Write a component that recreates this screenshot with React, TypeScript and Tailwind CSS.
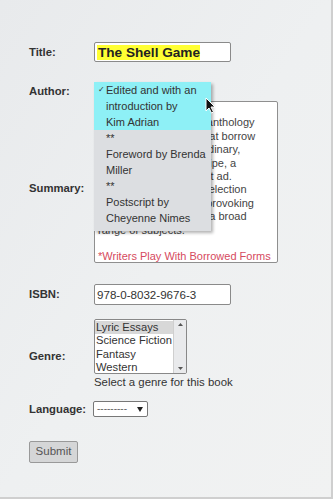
import React from 'react';

const font = { fontFamily: '"Liberation Sans", Arial, sans-serif' };

const summaryLines = [
  'Edited by Kim Adrian,',
  'The Shell Game is an anthology',
  'of innovative essays that borrow',
  'the structures of the ordinary,',
  'daily life, such as a recipe, a',
  'a shopping list, or a lost ad.',
  'Here is a remarkable selection',
  'of twenty-two thought-provoking',
  'lyric essays that cover a broad',
  'range of subjects.',
];

const authorOptions = [
  { lines: ['Edited and with an', 'introduction by', 'Kim Adrian'], selected: true },
  { lines: ['**'] },
  { lines: ['Foreword by Brenda', 'Miller'] },
  { lines: ['**'] },
  { lines: ['Postscript by', 'Cheyenne Nimes'] },
];

const genres = ['Lyric Essays', 'Science Fiction', 'Fantasy', 'Western'];

const Label = ({ children }: { children: React.ReactNode }) => (
  <div className="w-[65px] shrink-0 text-[11.3px] font-bold text-[#333]">{children}</div>
);

const Cursor = () => (
  <svg width="12" height="17" viewBox="0 0 12 17" className="absolute left-[205px] top-[97px]">
    <path d="M1 1 L1 14 L4 11 L6.5 16 L8.5 15 L6 10 L10 10 Z" fill="#111" stroke="#fff" strokeWidth="1" />
  </svg>
);

const App = () => {
  return (
    <div
      style={font}
      className="w-[333px] h-[499px] bg-gradient-to-br from-[#e8eaec] via-[#eef0f1] to-[#f1f2f2] border-r-2 border-b-2 border-[#cfcfcf] relative"
    >
      <div className="flex flex-col pl-[29px] pt-[42px]">
        {/* Title */}
        <div className="flex items-center h-[20px]">
          <Label>Title:</Label>
          <div className="w-[137px] h-[20px] bg-white border border-[#8a8a8a] rounded-[2px] flex items-center px-[2px]">
            <span className="bg-[#ffff33] text-[13.6px] font-bold text-[#222] leading-[15px] pl-[1px]">The Shell Game</span>
          </div>
        </div>

        {/* Author */}
        <div className="flex items-start h-[19px] mt-[20px]">
          <Label>
            <div className="pt-[1px]">Author:</div>
          </Label>
        </div>

        {/* Summary */}
        <div className="flex items-center">
          <Label>
            <div className="pt-[12px]">Summary:</div>
          </Label>
          <div className="w-[184px] h-[162px] bg-white border border-[#8f8f8f] rounded-[2px] px-[3px] pt-[1px] text-[11px] leading-[13.4px] text-[#444] overflow-hidden">
            {summaryLines.map((l, i) => (
              <div key={i} className="whitespace-nowrap">{l}</div>
            ))}
            <div className="h-[13.4px]" />
            <div className="whitespace-nowrap text-[#d64a5e]">*Writers Play With Borrowed Forms</div>
          </div>
        </div>

        {/* ISBN */}
        <div className="flex items-center mt-[21px]">
          <Label>ISBN:</Label>
          <div className="w-[137px] h-[21px] bg-white border border-[#8a8a8a] rounded-[2px] flex items-center pl-[2px] text-[11.6px] text-[#333]">
            978-0-8032-9676-3
          </div>
        </div>

        {/* Genre */}
        <div className="flex mt-[14px]">
          <Label>
            <div className="pt-[29px]">Genre:</div>
          </Label>
          <div className="flex flex-col">
            <div className="w-[93px] h-[55px] bg-white border border-[#888] rounded-[2px] flex overflow-hidden">
              <div className="flex-1 pt-[1px] text-[11.2px] leading-[13.3px] text-[#333]">
                {genres.map((g, i) => (
                  <div key={g} className={`pl-[1px] whitespace-nowrap ${i === 0 ? 'bg-[#d8d8d8]' : ''}`}>{g}</div>
                ))}
              </div>
              <div className="w-[13px] bg-[#e9eaec] border-l border-[#cfcfcf] flex flex-col items-center justify-between py-[3px]">
                <svg width="5" height="3" viewBox="0 0 5 3"><path d="M0 3 L2.5 0 L5 3 Z" fill="#555" /></svg>
                <svg width="5" height="3" viewBox="0 0 5 3"><path d="M0 0 L2.5 3 L5 0 Z" fill="#555" /></svg>
              </div>
            </div>
            <div className="text-[11.4px] text-[#333] mt-[1px] leading-[14px]">Select a genre for this book</div>
          </div>
        </div>

        {/* Language */}
        <div className="flex items-center mt-[12px]">
          <Label>Language:</Label>
          <div className="w-[55px] h-[16px] -ml-[1px] bg-white border border-[#777] rounded-[2px] flex items-center justify-between pl-[3px] pr-[4px]">
            <span className="text-[10px] text-[#666] leading-[10px]">---------</span>
            <svg width="6" height="5" viewBox="0 0 6 5"><path d="M0 0 L6 0 L3 5 Z" fill="#222" /></svg>
          </div>
        </div>

        {/* Submit */}
        <div className="mt-[20px]">
          <button className="w-[49px] h-[22px] bg-[#d5d6d7] border border-[#999] rounded-[2px] text-[11.5px] text-[#555]">
            Submit
          </button>
        </div>
      </div>

      {/* open author dropdown */}
      <div className="absolute left-[94px] top-[82px] w-[117px] bg-[#dcdee1] shadow-[2px_2px_3px_rgba(0,0,0,0.3)] pb-[5px] text-[11px] leading-[16px] text-[#333]">
        {authorOptions.map((o, i) => (
          <div key={i} className={`relative pl-[12px] ${o.selected ? 'bg-[#8ef0f6]' : ''}`}>
            {o.selected && <span className="absolute left-[4px] top-0 text-[8px]">✓</span>}
            {o.lines.map((l, j) => (
              <div key={j} className="whitespace-nowrap">{l}</div>
            ))}
          </div>
        ))}
      </div>
      <Cursor />
    </div>
  );
};

export default App;
